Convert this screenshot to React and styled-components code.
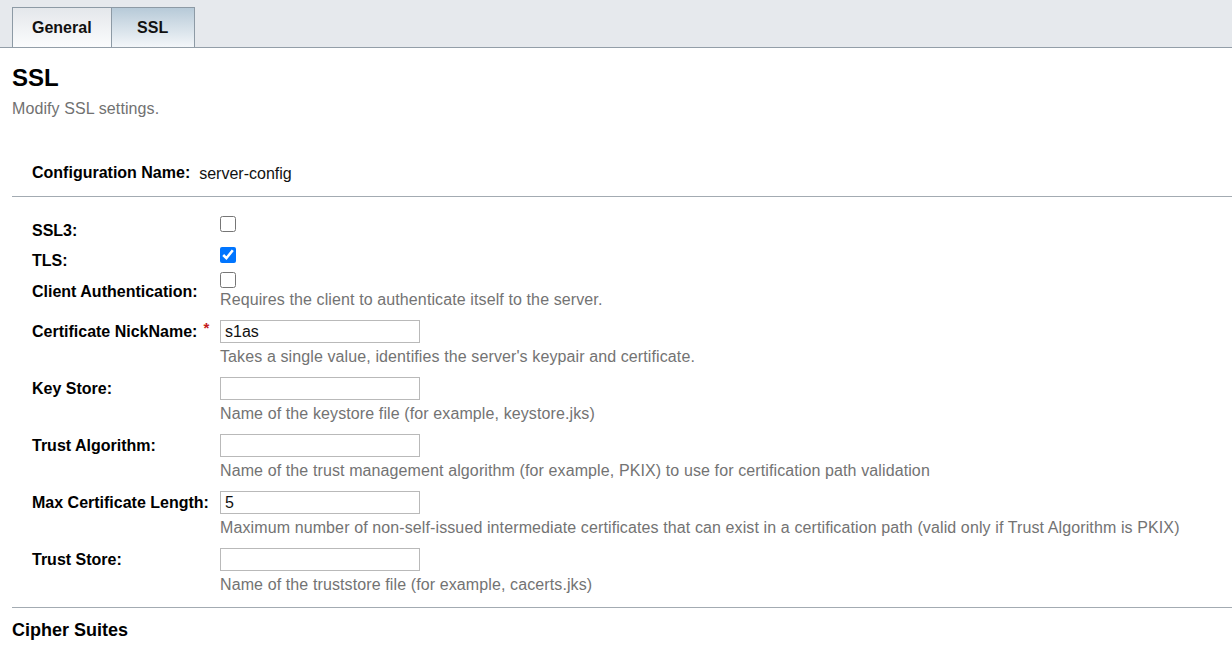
import React from "react";
import styled, { createGlobalStyle } from "styled-components";

const GlobalStyle = createGlobalStyle`
  body {
    margin: 0;
    background: #fff;
    font-family: "Liberation Sans", Arial, sans-serif;
    color: #000;
  }
`;

const TabBar = styled.div`
  display: flex;
  box-sizing: border-box;
  height: 48px;
  padding: 7px 12px 0;
  background: #e6e9ed;
  border-bottom: 1px solid #939ea8;
`;

const Tab = styled.div`
  display: flex;
  align-items: center;
  justify-content: center;
  box-sizing: border-box;
  min-width: 83px;
  padding: 0 19px;
  border-top: 1px solid #8d9aa5;
  border-right: 1px solid #8d9aa5;
  &:first-child {
    border-left: 1px solid #8d9aa5;
  }
  background: ${(p) =>
    p.$active
      ? "linear-gradient(to bottom, #b7cad8, #f3f6f9)"
      : "linear-gradient(to bottom, #e4e7eb, #fbfcfd)"};
  font-size: 16px;
  font-weight: bold;
  color: #111;
`;

const Content = styled.div`
  padding-left: 12px;
`;

const Title = styled.h1`
  margin: 16px 0 0;
  font-size: 24px;
  line-height: 28px;
  font-weight: bold;
  color: #000;
`;

const Subtitle = styled.p`
  margin: 8px 0 0;
  font-size: 16px;
  line-height: 18px;
  letter-spacing: 0.1px;
  color: #717171;
`;

const ConfigRow = styled.div`
  display: flex;
  gap: 9px;
  margin: 46px 0 0 20px;
  font-size: 16px;
  line-height: 18px;
`;

const ConfigLabel = styled.span`
  font-weight: bold;
`;

const ConfigValue = styled.span`
  padding-top: 1px;
  color: #111;
`;

const Separator = styled.hr`
  margin: ${(p) => p.$top}px 0 0;
  border: none;
  border-top: 1px solid #a3abb2;
  height: 0;
`;

const Form = styled.div`
  padding: 19px 0 0 20px;
`;

const Row = styled.div`
  display: grid;
  grid-template-columns: 188px 1fr;
  align-items: start;
  margin-top: ${(p) => p.$gap || 0}px;
  font-size: 16px;
  line-height: 18px;
`;

const Label = styled.div`
  padding-top: ${(p) => p.$pad || 0}px;
  font-weight: bold;
  color: #000;
`;

const Required = styled.span`
  margin-left: 6px;
  color: #c41a1a;
  font-size: 15px;
  vertical-align: 4px;
  line-height: 0;
`;

const Field = styled.div`
  display: flex;
  flex-direction: column;
  align-items: flex-start;
`;

const Check = styled.input.attrs({ type: "checkbox" })`
  display: block;
  width: 16px;
  height: 16px;
  margin: 0;
`;

const TextInput = styled.input.attrs({ type: "text" })`
  box-sizing: border-box;
  width: 200px;
  height: 23px;
  margin: 0;
  padding: 0 4px;
  border: 1px solid #b9b9b9;
  font-family: "Liberation Sans", Arial, sans-serif;
  font-size: 16px;
  color: #111;
`;

const Help = styled.div`
  margin-top: ${(p) => p.$top || 0}px;
  color: #737373;
  letter-spacing: 0.11px;
  white-space: nowrap;
`;

const SectionTitle = styled.h2`
  margin: 12px 0 0;
  font-size: 18px;
  line-height: 21px;
  font-weight: bold;
  color: #000;
`;

const checks = [
  { label: "SSL3:", checked: false, pad: 6, gap: 0 },
  { label: "TLS:", checked: true, pad: 5, gap: 7 },
  {
    label: "Client Authentication:",
    checked: false,
    pad: 11,
    gap: 2,
    help: "Requires the client to authenticate itself to the server.",
  },
];

const fields = [
  {
    label: "Certificate NickName:",
    required: true,
    value: "s1as",
    help: "Takes a single value, identifies the server's keypair and certificate.",
  },
  {
    label: "Key Store:",
    value: "",
    help: "Name of the keystore file (for example, keystore.jks)",
  },
  {
    label: "Trust Algorithm:",
    value: "",
    help: "Name of the trust management algorithm (for example, PKIX) to use for certification path validation",
  },
  {
    label: "Max Certificate Length:",
    value: "5",
    help: "Maximum number of non-self-issued intermediate certificates that can exist in a certification path (valid only if Trust Algorithm is PKIX)",
  },
  {
    label: "Trust Store:",
    value: "",
    help: "Name of the truststore file (for example, cacerts.jks)",
  },
];

export default function App() {
  return (
    <>
      <GlobalStyle />
      <TabBar>
        <Tab>General</Tab>
        <Tab $active>SSL</Tab>
      </TabBar>
      <Content>
        <Title>SSL</Title>
        <Subtitle>Modify SSL settings.</Subtitle>
        <ConfigRow>
          <ConfigLabel>Configuration Name:</ConfigLabel>
          <ConfigValue>server-config</ConfigValue>
        </ConfigRow>
        <Separator $top={13} />
        <Form>
          {checks.map((c) => (
            <Row key={c.label} $gap={c.gap}>
              <Label $pad={c.pad}>{c.label}</Label>
              <Field>
                <Check defaultChecked={c.checked} />
                {c.help && <Help $top={3}>{c.help}</Help>}
              </Field>
            </Row>
          ))}
          {fields.map((f) => (
            <Row key={f.label} $gap={11}>
              <Label $pad={3}>
                {f.label}
                {f.required && <Required>*</Required>}
              </Label>
              <Field>
                <TextInput defaultValue={f.value} />
                <Help $top={5}>{f.help}</Help>
              </Field>
            </Row>
          ))}
        </Form>
        <Separator $top={13} />
        <SectionTitle>Cipher Suites</SectionTitle>
      </Content>
    </>
  );
}
